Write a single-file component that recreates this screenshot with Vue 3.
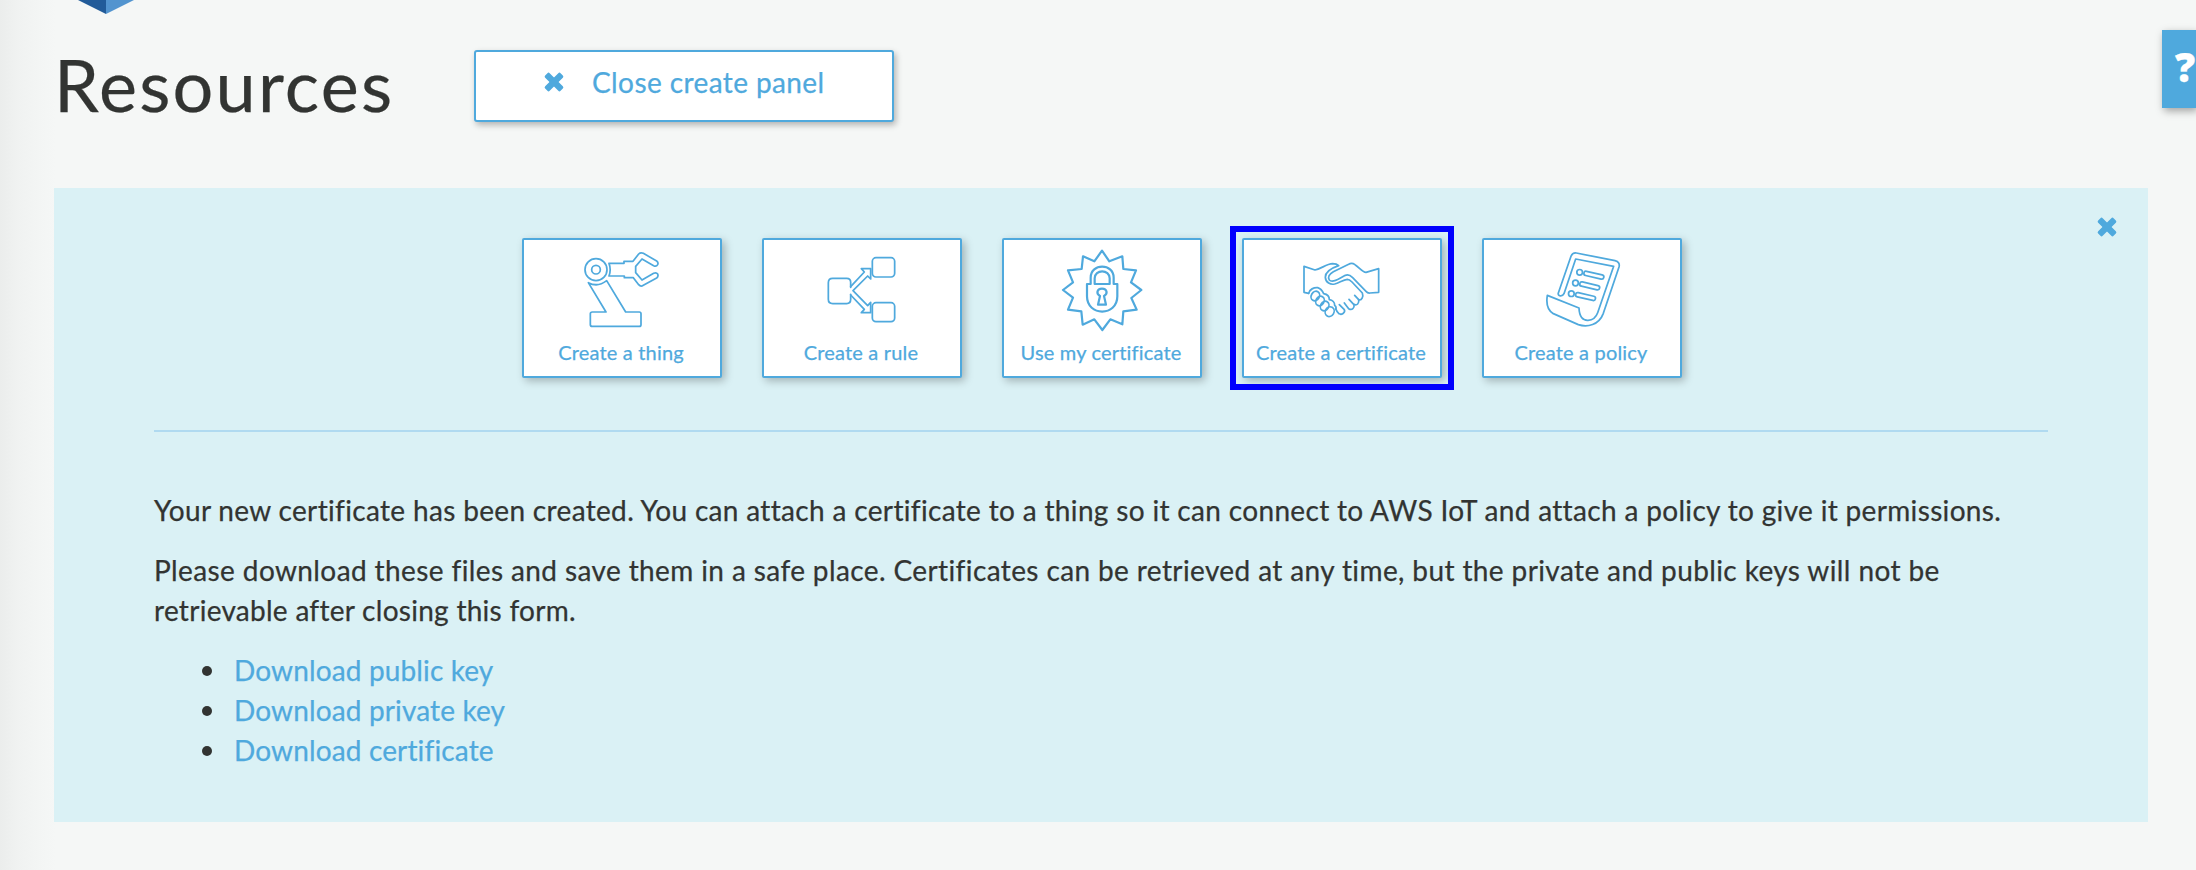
<script setup>
const cards = [
  { id: 'thing', label: 'Create a thing', viewBox: '42 45 588 300' },
  { id: 'rule', label: 'Create a rule', viewBox: '42 45 588 300' },
  { id: 'use-cert', label: 'Use my certificate', viewBox: '42 45 588 300' },
  { id: 'cert', label: 'Create a certificate', viewBox: '-138 -30 588 300', active: true },
  { id: 'policy', label: 'Create a policy', viewBox: '42 45 588 300' },
]
const downloads = ['Download public key', 'Download private key', 'Download certificate']
</script>

<template>
  <div class="page">
    <svg class="logo" viewBox="0 0 56 14">
      <path d="M0 0H28V14Z" fill="#215b99" />
      <path d="M28 0H56L28 14Z" fill="#5294cf" />
    </svg>

    <header class="header">
      <h1 class="title">Resources</h1>
      <button class="toggle">
        <svg class="cross" viewBox="0 0 20 20">
          <g transform="rotate(45 10 10)">
            <rect x="-0.9" y="6.8" width="21.8" height="6.4" rx="1.6" />
            <rect x="6.8" y="-0.9" width="6.4" height="21.8" rx="1.6" />
          </g>
        </svg>
        <span>Close create panel</span>
      </button>
    </header>

    <section class="panel">
      <button class="dismiss" aria-label="Close">
        <svg class="cross" viewBox="0 0 20 20">
          <g transform="rotate(45 10 10)">
            <rect x="-0.9" y="6.8" width="21.8" height="6.4" rx="1.6" />
            <rect x="6.8" y="-0.9" width="6.4" height="21.8" rx="1.6" />
          </g>
        </svg>
      </button>

      <nav class="cards">
        <div v-for="c in cards" :key="c.id" class="card" :class="[c.id, { active: c.active }]">
          <svg class="icon" :viewBox="c.viewBox">
            <g v-if="c.id === 'thing'">
              <circle cx="258" cy="134" r="33" />
              <circle cx="258" cy="134" r="13" />
              <path d="M297 115H342V109H369L386 87Q392 81 400 85L440 108Q446 113 443 119Q439 126 431 122L396 102L377 124V143L396 165L431 145Q439 141 443 147Q446 154 440 159L400 181Q392 186 386 179L370 158H343V153H297Q304 134 297 115Z" />
              <path d="M235 173Q263 188 290 167L347 261H388Q393 261 393 266V299Q393 304 388 304H247Q241 304 241 299V266Q241 261 247 261H288Z" />
            </g>
            <g v-else-if="c.id === 'rule'">
              <rect x="367" y="98" width="67" height="58" rx="11" />
              <rect x="367" y="233" width="67" height="57" rx="11" />
              <path d="M302 187V172Q302 160 290 160H248Q235 160 235 173V223Q235 236 248 236H290Q302 236 302 223V208" />
              <path d="M302 185L343 141L334 131H362V162L353 153L309 197L353 242L362 232V263H334L343 253L302 210" />
            </g>
            <g v-else-if="c.id === 'use-cert'" class="bold">
              <path d="M336 77L358 109L397 94L400 132L438 136L423 172L454 195L424 219L440 254L400 259L397 298L361 283L337 315L313 283L278 299L274 259L234 254L249 218L219 195L249 172L234 136L275 132L279 94L313 109Z" />
              <path d="M291 177H302V158C302 114 371 114 371 158V177H382V214C382 275 291 275 291 214Z" />
              <path d="M314 177V160C314 132 359 132 359 160V177Z" />
              <path d="M330 213C318 207 320 191 336 191C352 191 354 207 342 213L348 239H324Z" />
            </g>
            <g v-else-if="c.id === 'cert'">
              <path d="M56 130L42 127V49L75 60C95 56 108 42 128 41C137 41 143 44 146 47C128 53 106 62 106 82C107 98 122 105 134 102C148 98 160 89 172 88C178 88 182 92 186 96L217 129C221 140 215 153 206 149L194 136" />
              <path d="M206 149C208 160 201 168 191 163L177 148" />
              <path d="M192 163C194 174 186 182 176 176L163 159" />
              <path d="M148 164L163 179C167 188 154 196 147 191Q141 187 137 176" />
              <path d="M56 130C58 118 72 112 83 113C92 116 98 124 101 131C112 133 118 141 118 149C128 150 134 158 134 166C139 170 139 174 137 178" />
              <path d="M266 56L228 67C216 66 208 52 195 44C188 39 182 39 176 43L130 65C118 72 112 82 118 90C124 97 138 92 150 85L166 76C176 72 182 77 188 83L228 124Q233 130 240 129L266 127Z" />
              <ellipse cx="76" cy="138" rx="12" ry="15" transform="rotate(30 76 138)" />
              <ellipse cx="90" cy="153" rx="12" ry="15" transform="rotate(30 90 153)" />
              <ellipse cx="104" cy="168" rx="12" ry="15" transform="rotate(30 104 168)" />
              <ellipse cx="119" cy="185" rx="13" ry="15" transform="rotate(30 119 185)" />
            </g>
            <g v-else>
              <path d="M265 204L303 94Q307 83 319 84L435 107Q451 111 447 126L400 265C387 300 352 308 325 299L250 266C233 256 228 236 232 211L327 249C328 275 338 287 354 286C369 285 378 277 383 263L431 124L317 102L282 206C277 216 262 214 265 204Z" />
              <g v-for="r in 3" :key="r" :transform="`translate(${-12.5 * (r - 1)} ${32 * (r - 1)})`">
                <circle cx="329" cy="142" r="8.5" />
                <rect x="341" y="144" width="61" height="13" rx="6.5" transform="rotate(13 371 151)" />
              </g>
            </g>
          </svg>
          <span class="label">{{ c.label }}</span>
        </div>
      </nav>

      <hr class="rule-line" />

      <div class="message">
        <p class="intro">Your new certificate has been created. You can attach a certificate to a thing so it can connect to AWS IoT and attach a policy to give it permissions.</p>
        <p><span class="warn">Please download these files and save them in a safe place. Certificates can be retrieved at any time, but the private and public keys will not be</span><br /><span class="tail">retrievable after closing this form.</span></p>
        <ul>
          <li v-for="d in downloads" :key="d"><a>{{ d }}</a></li>
        </ul>
      </div>
    </section>

    <aside class="help">?</aside>
  </div>
</template>

<style>
body {
  background: #f4f7f6;
  overflow: hidden;
}
</style>

<style scoped>
* {
  box-sizing: border-box;
}
.page {
  position: relative;
  height: 870px;
  overflow: hidden;
  padding: 0 48px 0 54px;
  background: linear-gradient(to right, #ebedec 0, #f0f2f1 18px, #f3f5f4 38px, #f5f7f6 56px);
  font-family: Lato, "Noto Sans", sans-serif;
  font-size: 28px;
  line-height: 40px;
  color: #323432;
  -webkit-text-stroke: 0.25px currentColor;
}
.logo {
  display: block;
  width: 56px;
  height: 14px;
  margin-left: 24px;
}
.header {
  display: flex;
  align-items: flex-start;
  height: 174px;
  padding-top: 34px;
}
.title {
  width: 420px;
  margin: 0;
  font-size: 72px;
  line-height: 72px;
  font-weight: 400;
  letter-spacing: 2.2px;
}
.toggle {
  display: flex;
  width: 420px;
  height: 72px;
  margin-top: 2px;
  padding: 10px 0 0 67px;
  border: 2px solid #4fa9dd;
  border-radius: 3px;
  background: #fff;
  box-shadow: 2px 3px 6px rgba(0, 0, 0, 0.28);
  font: inherit;
  line-height: 40px;
  letter-spacing: 0.4px;
  color: #4fa9dd;
}
.cross {
  display: block;
  width: 20px;
  height: 20px;
  fill: #4fa9dd;
  overflow: visible;
}
.toggle .cross {
  margin: 10px 28px 0 1px;
}
.panel {
  position: relative;
  height: 634px;
  padding: 50px 100px 0;
  background: #daf1f5;
}
.dismiss {
  position: absolute;
  top: 29px;
  right: 31px;
  padding: 0;
  border: 0;
  background: none;
}
.cards {
  display: flex;
  justify-content: center;
  gap: 40px;
  padding-left: 2px;
}
.card {
  position: relative;
  width: 200px;
  height: 140px;
  border: 2px solid #4fa9dd;
  border-radius: 2px;
  background: #fff;
  box-shadow: 3px 3px 8px rgba(0, 0, 0, 0.26);
  text-align: center;
  color: #4fa9dd;
}
.card.active::after {
  content: "";
  position: absolute;
  inset: -14px;
  border: 6px solid #0000fe;
}
.icon {
  display: block;
  width: 196px;
  height: 100px;
  fill: none;
  stroke: #4fa9dd;
  stroke-width: 5.2;
  stroke-linejoin: round;
  stroke-linecap: round;
}
.bold {
  stroke-width: 6.6;
}
.label {
  display: block;
  margin: 0 1px 0 -1px;
  font-size: 20px;
  line-height: 24px;
  letter-spacing: 0.18px;
  white-space: nowrap;
}
.rule-line {
  height: 2px;
  margin: 52px 0 0;
  border: 0;
  background: #b0daf0;
}
.message {
  padding-top: 58px;
}
.message p {
  margin: 0 0 20px;
  white-space: nowrap;
}
.intro {
  letter-spacing: 0.335px;
}
.warn {
  letter-spacing: 0.39px;
}
.tail {
  letter-spacing: 0.28px;
}
.message ul {
  margin: 0;
  padding: 0 0 0 48px;
  list-style: none;
}
.message li {
  display: flex;
  align-items: center;
  letter-spacing: 0.14px;
  color: #4fa9dd;
}
.message li::before {
  content: "";
  width: 10px;
  height: 10px;
  margin: 1px 22px 0 0;
  border-radius: 50%;
  background: #323432;
}
.help {
  position: absolute;
  top: 30px;
  right: 0;
  width: 34px;
  height: 78px;
  padding-left: 13px;
  background: #4fa9dd;
  box-shadow: 2px 3px 8px rgba(0, 0, 0, 0.35);
  font-family: "Open Sans", sans-serif;
  font-size: 40px;
  font-weight: 800;
  line-height: 74px;
  color: #fff;
}
</style>
